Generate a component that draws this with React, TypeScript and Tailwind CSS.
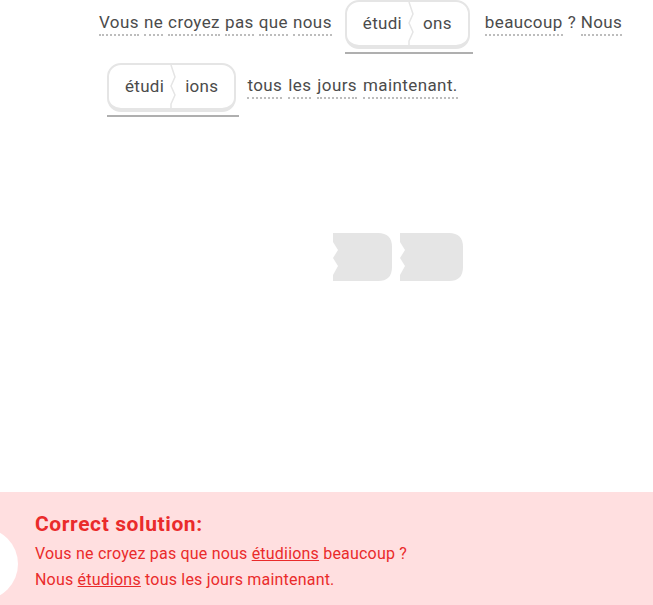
import type { ReactNode } from 'react'

const font = { fontFamily: 'Roboto, "Liberation Sans", sans-serif' }

function Word({ children }: { children: ReactNode }) {
  return (
    <span className="mt-[11px] border-b-2 border-dotted border-[#bdbdbd] text-[17px] leading-[23px] tracking-[0.4px] text-[#4b4b4b]">
      {children}
    </span>
  )
}

function Seam() {
  return (
    <svg width="8" height="44" viewBox="0 0 8 44" className="shrink-0">
      <polyline
        points="2,0 6,12 2,21 6,30 2,39 2,44"
        fill="none"
        stroke="#e5e5e5"
        strokeWidth="1.5"
        strokeLinejoin="round"
      />
    </svg>
  )
}

function SplitTile({ stem, ending }: { stem: string; ending: string }) {
  return (
    <div className="mx-2 flex flex-col">
      <div className="flex h-[49px] items-center rounded-[14px] border-2 border-b-4 border-[#e5e5e5] bg-white text-[17px] tracking-[0.3px] text-[#4b4b4b]">
        <span className="pl-4 pr-[5px]">{stem}</span>
        <Seam />
        <span className="pl-[8px] pr-[16px]">{ending}</span>
      </div>
      <div className="mt-[3px] h-[2px] w-[calc(100%+3px)] bg-[#afafaf]" />
    </div>
  )
}

function Piece({ width }: { width: number }) {
  return (
    <svg width={width} height="48" viewBox={`0 0 ${width} 48`}>
      <path
        d={`M0 0 H${width - 14} Q${width} 0 ${width} 14 V34 Q${width} 48 ${width - 14} 48 H0 L0 42 L5 33 L0 25 L5 17 L0 9 Z`}
        fill="#e5e5e5"
      />
    </svg>
  )
}

export default function App() {
  return (
    <div className="relative flex h-[605px] w-full flex-col overflow-hidden bg-white" style={font}>
      <div className="flex flex-wrap items-start gap-y-[9px] pl-[99px] pr-[20px]">
        <div className="flex items-start gap-x-[5px]">
          <Word>Vous</Word>
          <Word>ne</Word>
          <Word>croyez</Word>
          <Word>pas</Word>
          <Word>que</Word>
          <Word>nous</Word>
        </div>
        <div className="ml-[5px]">
          <SplitTile stem="étudi" ending="ons" />
        </div>
        <div className="ml-[7px] flex items-start gap-x-[5px]">
          <Word>beaucoup</Word>
          <span className="mt-[11px] text-[17px] leading-[23px] text-[#4b4b4b]">?</span>
          <Word>Nous</Word>
        </div>
        <SplitTile stem="étudi" ending="ions" />
        <div className="ml-[3px] flex items-start gap-x-[6px]">
          <Word>tous</Word>
          <Word>les</Word>
          <Word>jours</Word>
          <Word>maintenant.</Word>
        </div>
      </div>

      <div className="mt-[116px] flex gap-2 pl-[333px]">
        <Piece width={59} />
        <Piece width={63} />
      </div>

      <div className="relative mt-auto h-[113px] bg-[#ffdfe0] pl-[35px] pt-[19px] text-[#ea2b2b]">
        <div className="absolute left-[-54px] top-[36px] h-[72px] w-[72px] rounded-full bg-white" />
        <div className="text-[21px] font-bold leading-[26px] tracking-[0.6px]">Correct solution:</div>
        <div className="mt-[4px] text-[16px] leading-[26px] tracking-[0.2px]">
          Vous ne croyez pas que nous <span className="underline">étudiions</span> beaucoup ?
        </div>
        <div className="text-[16px] leading-[26px] tracking-[0.2px]">
          Nous <span className="underline">étudions</span> tous les jours maintenant.
        </div>
      </div>
    </div>
  )
}
